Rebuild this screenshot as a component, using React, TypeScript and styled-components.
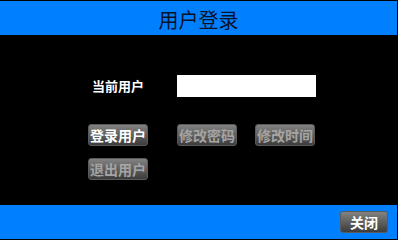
import React from 'react';
import styled, { createGlobalStyle } from 'styled-components';

const GlobalStyle = createGlobalStyle`
  html, body {
    margin: 0;
    padding: 0;
    background: #000;
  }
`;

const Screen = styled.div`
  width: 397px;
  height: 238px;
  border-top: 1px solid #000;
  border-right: 1px solid #000;
  display: flex;
  flex-direction: column;
  background: #000;
  font-family: 'Noto Sans CJK SC', 'Noto Sans', sans-serif;
`;

const Header = styled.div`
  height: 34px;
  background: #0080ff;
  display: flex;
  justify-content: center;
  align-items: flex-end;
`;

const Title = styled.h1`
  margin: 0 0 2px;
  font-size: 20px;
  line-height: 26px;
  font-weight: 400;
  color: #081228;
`;

const Body = styled.div`
  flex: 1;
  padding: 40px 0 0 88px;
  display: grid;
  grid-template-columns: 89px 78px 60px;
  grid-template-rows: 22px 22px 22px;
  align-content: start;
`;

const Label = styled.div`
  width: 60px;
  text-align: center;
  color: #fff;
  font-weight: 700;
  font-size: 13px;
  line-height: 22px;
`;

const Input = styled.div`
  grid-column: 2 / 4;
  width: 139px;
  height: 22px;
  background: #fff;
`;

const Button = styled.button<{ $disabled?: boolean; $top?: number }>`
  width: 60px;
  height: 22px;
  margin-top: ${p => p.$top ?? 0}px;
  padding: 0;
  border: 1px solid #5a5a5a;
  border-radius: 3px;
  background: linear-gradient(#828282, #3c3c3c);
  color: ${p => (p.$disabled ? '#a4a4a4' : '#fff')};
  font-family: inherit;
  font-weight: 700;
  font-size: 14px;
  line-height: 20px;
  cursor: pointer;
`;

const Footer = styled.div`
  height: 34px;
  background: #0080ff;
  display: flex;
  justify-content: flex-end;
  align-items: flex-start;
  padding: 6px 9px 0 0;
  box-sizing: border-box;
`;

const CloseButton = styled(Button)`
  width: 48px;
`;

const App: React.FC = () => (
  <>
    <GlobalStyle />
    <Screen>
      <Header>
        <Title>用户登录</Title>
      </Header>
      <Body>
        <Label>当前用户</Label>
        <Input />
        <Button $top={27}>登录用户</Button>
        <Button $top={27} $disabled>
          修改密码
        </Button>
        <Button $top={27} $disabled>
          修改时间
        </Button>
        <Button $top={39} $disabled>
          退出用户
        </Button>
      </Body>
      <Footer>
        <CloseButton>关闭</CloseButton>
      </Footer>
    </Screen>
  </>
);

export default App;
